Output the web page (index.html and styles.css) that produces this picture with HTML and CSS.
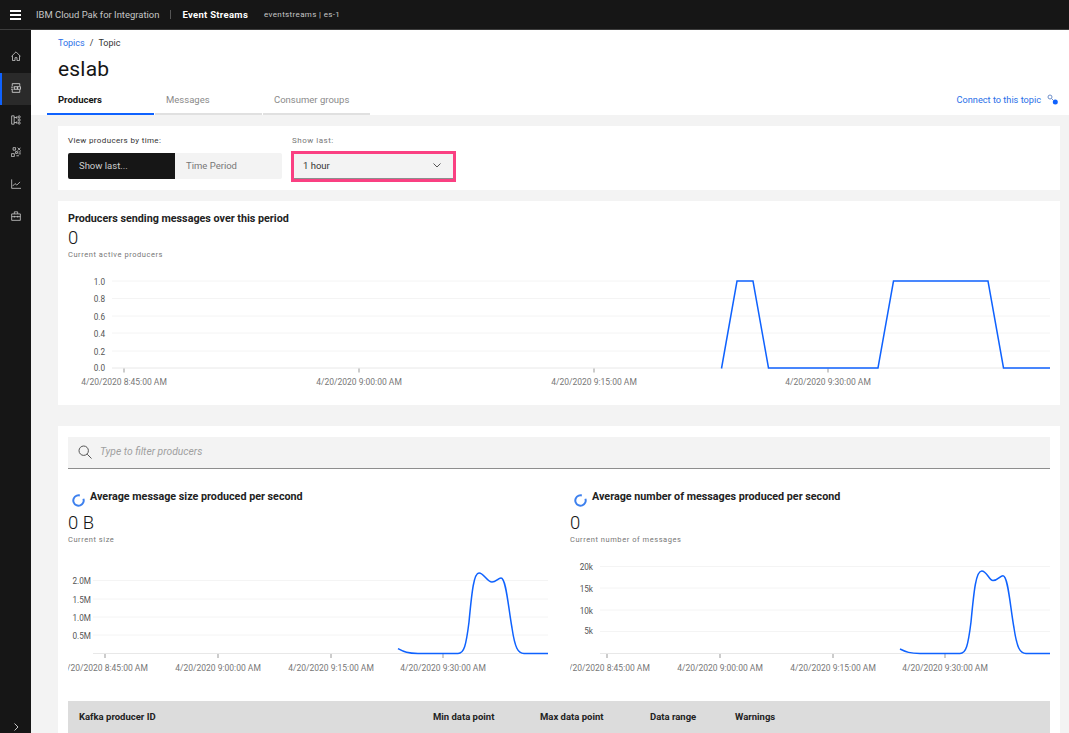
FILE: index.html
```html
<!DOCTYPE html>
<html lang="en">
<head>
<meta charset="UTF-8">
<title>Event Streams</title>
<link rel="stylesheet" href="styles.css">
</head>
<body>

<header class="topbar">
	<svg class="burger" width="11" height="10" viewBox="0 0 11 10"><path d="M0 0h11v2H0zM0 4h11v2H0zM0 8h11v2H0z" fill="#fff"/></svg>
	<span class="topbar-product">IBM Cloud Pak for Integration</span>
	<span class="topbar-sep"></span>
	<span class="topbar-app">Event Streams</span>
	<span class="topbar-inst">eventstreams | es-1</span>
</header>

<div class="page">
	<nav class="sidenav">
		<div class="sidenav-item">
			<svg width="10" height="10" viewBox="0 0 12 12" fill="none" stroke="#c6c6c6"><path d="M.5 6.500L6 1l5.500 5.500M1.800 5.500v6h3V8h2.400v3.500h3v-6"/></svg>
		</div>
		<div class="sidenav-item sidenav-item-active">
			<svg width="10" height="10" viewBox="0 0 12 12" fill="none" stroke="#d8d8d8"><path d="M1.500 3.500V.8h9v2.700M1.500 8.500v2.700h9V8.500M0 5h3M0 7.500h3"/><rect x="4" y="4.500" width="3.500" height="3"/><rect x="8" y="4.500" width="3.500" height="3"/></svg>
		</div>
		<div class="sidenav-item">
			<svg width="10" height="10" viewBox="0 0 12 12" fill="none" stroke="#c6c6c6"><path d="M.8 1h3v10h-3zM3.800 3H7M3.800 9H7M7 1.500v3M7 7.500v3"/><circle cx="9.800" cy="2.300" r="1.300"/><circle cx="9.800" cy="6" r="1.300"/><circle cx="9.800" cy="9.700" r="1.300"/></svg>
		</div>
		<div class="sidenav-item">
			<svg width="10" height="10" viewBox="0 0 12 12" fill="none" stroke="#c6c6c6"><path d="M2.500.8h3v3h-3zM.5 8h3.500v3.500H.5zM8 .8l3.500 3.500M11.500.8L8 4.300M5.500 5.500h2.200v2.200H5.500zM9 6h2.800M9 8.200h2.800M6.500 10.500h3"/></svg>
		</div>
		<div class="sidenav-item">
			<svg width="10" height="10" viewBox="0 0 12 12" fill="none" stroke="#c6c6c6"><path d="M.8.500v10.700H12M2 8.500l2.800-3 2.200 1.800 3.800-3.800"/></svg>
		</div>
		<div class="sidenav-item">
			<svg width="10" height="10" viewBox="0 0 12 12" fill="none" stroke="#c6c6c6"><path d="M.8 3.500h10.400v7.700H.8zM4 3.500V1h4v2.500M.8 6.800h10.400M4 5.800v2M8 5.800v2"/></svg>
		</div>
		<svg class="sidenav-expand" width="6" height="8" viewBox="0 0 6 8" fill="none" stroke="#c6c6c6"><path d="M1.500.5L5 4 1.500 7.500"/></svg>
	</nav>

	<main class="content">
		<div class="page-head">
			<div class="crumbs"><a class="link">Topics</a><span class="crumb-sep">/</span><span>Topic</span></div>
			<h1 class="page-title">eslab</h1>
			<div class="tabs-row">
				<div class="tabs">
					<div class="tab tab-active">Producers</div>
					<div class="tab">Messages</div>
					<div class="tab">Consumer groups</div>
				</div>
				<a class="connect link">Connect to this topic
					<svg width="11" height="11" viewBox="0 0 11 11" fill="none"><circle cx="3" cy="3" r="2" stroke="#6f8fc9"/><path d="M4.500 4.500l2 2" stroke="#6f8fc9"/><circle cx="8.300" cy="8" r="2.500" fill="#0f62fe"/></svg>
				</a>
			</div>
		</div>

		<div class="panels">
			<section class="card card-filter">
				<div>
					<div class="field-label">View producers by time:</div>
					<div class="switcher">
						<div class="switch switch-on">Show last...</div>
						<div class="switch">Time Period</div>
					</div>
				</div>
				<div class="field-last">
					<div class="field-label field-label-light">Show last:</div>
					<div class="select">
						<span>1 hour</span>
						<svg width="8" height="5" viewBox="0 0 8 5" fill="none" stroke="#555"><path d="M.5.500L4 4 7.500.5"/></svg>
					</div>
				</div>
			</section>

			<section class="card card-chart">
				<h2 class="chart-title">Producers sending messages over this period</h2>
				<div class="metric">0</div>
				<div class="metric-label">Current active producers</div>
				<svg class="chart" width="982" height="130" viewBox="10 6.500 982 130">
					<g class="grid">
						<path d="M54 27.500H992M54 45H992M54 62.500H992M54 79.500H992M54 97.500H992"/>
						<path class="axis" d="M54 114.500H992"/>
						<path class="tick" d="M66 115v4M301 115v4M536 115v4M770 115v4"/>
					</g>
					<g class="labels-y">
						<text x="47" y="31">1.0</text>
						<text x="47" y="48.500">0.8</text>
						<text x="47" y="66">0.6</text>
						<text x="47" y="83">0.4</text>
						<text x="47" y="101">0.2</text>
						<text x="47" y="117">0.0</text>
					</g>
					<g class="labels-x">
						<text x="66" y="131">4/20/2020 8:45:00 AM</text>
						<text x="301" y="131">4/20/2020 9:00:00 AM</text>
						<text x="536" y="131">4/20/2020 9:15:00 AM</text>
						<text x="770" y="131">4/20/2020 9:30:00 AM</text>
					</g>
					<path class="line" d="M663.500 115L679 27.500H695L710.500 114.500H820L835.500 27.500H930L945.500 114.500H992"/>
				</svg>
			</section>

			<section class="card card-list">
				<div class="search">
					<svg width="14" height="14" viewBox="0 0 14 14" fill="none" stroke="#555"><circle cx="5.700" cy="5.700" r="4.700"/><path d="M9.200 9.200L13.500 13.500"/></svg>
					<span>Type to filter producers</span>
				</div>

				<div class="chart-pair">
					<div class="chart-col">
						<h2 class="chart-title chart-title-spin">
							<svg class="spinner" width="13" height="13" viewBox="0 0 13 13"><circle cx="6.500" cy="6.500" r="5.200" fill="none" stroke="#3d80ee" stroke-width="2" stroke-dasharray="27 5.700" transform="rotate(-20 6.500 6.500)"/></svg>
							Average message size produced per second
						</h2>
						<div class="metric">0 B</div>
						<div class="metric-label">Current size</div>
						<svg class="chart chart-clip" width="480" height="130" viewBox="0 -15 480 130">
							<g class="grid">
								<path d="M25 20.500H480M25 39H480M25 57H480M25 75H480"/>
								<path class="axis" d="M25 93.500H480"/>
								<path class="tick" d="M37 94v4M150 94v4M263 94v4M375 94v4"/>
							</g>
							<g class="labels-y">
								<text x="23" y="24">2.0M</text>
								<text x="23" y="42.500">1.5M</text>
								<text x="23" y="60.500">1.0M</text>
								<text x="23" y="78.500">0.5M</text>
							</g>
							<g class="labels-x">
								<text x="37" y="111">4/20/2020 8:45:00 AM</text>
								<text x="150" y="111">4/20/2020 9:00:00 AM</text>
								<text x="263" y="111">4/20/2020 9:15:00 AM</text>
								<text x="375" y="111">4/20/2020 9:30:00 AM</text>
							</g>
							<path class="line" d="M330 88.700C336 92 340 93.500 350 93.500H390C396 93.500 398 86 401 62C404 30 406 13 411 13C416 13 419 22 424 22C428 22 430 18 433 18C438 18 440 45 444 68C447 88 450 93.500 456 93.500H480"/>
						</svg>
					</div>
					<div class="chart-col">
						<h2 class="chart-title chart-title-spin">
							<svg class="spinner" width="13" height="13" viewBox="0 0 13 13"><circle cx="6.500" cy="6.500" r="5.200" fill="none" stroke="#3d80ee" stroke-width="2" stroke-dasharray="27 5.700" transform="rotate(-20 6.500 6.500)"/></svg>
							Average number of messages produced per second
						</h2>
						<div class="metric">0</div>
						<div class="metric-label">Current number of messages</div>
						<svg class="chart chart-clip" width="480" height="130" viewBox="0 -1 480 130">
							<g class="grid">
								<path d="M30 20.500H480M30 42H480M30 64H480M30 85.500H480"/>
								<path class="axis" d="M30 107.500H480"/>
								<path class="tick" d="M37 108v4M150 108v4M263 108v4M375 108v4"/>
							</g>
							<g class="labels-y">
								<text x="23" y="24">20k</text>
								<text x="23" y="46">15k</text>
								<text x="23" y="68">10k</text>
								<text x="23" y="88">5k</text>
							</g>
							<g class="labels-x">
								<text x="37" y="125">4/20/2020 8:45:00 AM</text>
								<text x="150" y="125">4/20/2020 9:00:00 AM</text>
								<text x="263" y="125">4/20/2020 9:15:00 AM</text>
								<text x="375" y="125">4/20/2020 9:30:00 AM</text>
							</g>
							<path class="line" d="M330 103C336 106 340 107.500 350 107.500H390C396 107.500 398 100 401 76C404 44 406 25 411.700 25C417 25 419 34.500 423 34.500C428 34.500 430 29.700 433 29.700C438 29.700 440 59 444 82C447 102 450 107.500 456 107.500H480"/>
						</svg>
					</div>
				</div>

				<div class="table-head">
					<div class="col-id">Kafka producer ID</div>
					<div class="col-min">Min data point</div>
					<div class="col-max">Max data point</div>
					<div class="col-range">Data range</div>
					<div class="col-warn">Warnings</div>
				</div>
			</section>
		</div>
	</main>
</div>

</body>
</html>
```

FILE: styles.css
```css
* {
	box-sizing: border-box;
}
body {
	margin: 0;
	height: 733px;
	overflow: hidden;
	background: #f3f3f3;
	color: #161616;
	font-family: "Roboto", "Noto Sans", sans-serif;
	font-size: 10px;
}

.topbar {
	height: 30px;
	background: #161616;
	border-bottom: 1px solid #3d3d3d;
	color: #c6c6c6;
	display: flex;
	align-items: center;
	padding-left: 10px;
}
.burger {
	margin-right: 15px;
}
.topbar-product {
	font-size: 9.450px;
}
.topbar-sep {
	width: 1px;
	height: 9px;
	background: #555;
	margin: 0 11px;
}
.topbar-app {
	color: #fff;
	font-weight: 700;
	font-size: 9.500px;
	letter-spacing: .3px;
}
.topbar-inst {
	margin-left: 16px;
	font-size: 8px;
	letter-spacing: .35px;
}

.page {
	display: flex;
	height: 703px;
}
.sidenav {
	width: 31px;
	background: #161616;
	padding-top: 11px;
	position: relative;
	flex-shrink: 0;
}
.sidenav-item {
	height: 32px;
	display: flex;
	align-items: center;
	justify-content: center;
	border-left: 2px solid transparent;
	padding: 0 2px 2px 0;
}
.sidenav-item-active {
	background: #2a2a2a;
	border-left-color: #0f62fe;
}
.sidenav-expand {
	position: absolute;
	left: 13px;
	bottom: 2px;
}

.content {
	flex: 1;
	min-width: 0;
}
.page-head {
	background: #fff;
	height: 85px;
	padding: 7px 0 0 16px;
}
.link {
	color: #2a6fe8;
}
.crumbs {
	font-size: 9px;
	line-height: 12px;
	padding-left: 11px;
	color: #333;
}
.crumb-sep {
	margin: 0 5px;
}
.page-title {
	margin: 7px 0 0 11px;
	font-size: 21px;
	font-weight: 400;
	line-height: 26px;
	letter-spacing: .2px;
}
.tabs-row {
	display: flex;
	justify-content: space-between;
	align-items: flex-end;
	margin-top: 3px;
}
.tabs {
	display: flex;
	gap: 1px;
}
.tab {
	width: 107px;
	height: 30px;
	padding: 9px 0 0 11px;
	border-bottom: 2px solid #e0e0e0;
	font-size: 9.500px;
	line-height: 12px;
	color: #8a8a8a;
}
.tab-active {
	border-bottom-color: #0f62fe;
	color: #161616;
	font-weight: 700;
}
.connect {
	font-size: 9.200px;
	display: flex;
	align-items: center;
	gap: 6px;
	padding: 0 11px 10px 0;
}

.panels {
	padding: 11px 9px 0 27px;
	display: flex;
	flex-direction: column;
	gap: 11px;
}
.card {
	background: #fff;
	padding: 0 10px;
}
.card-filter {
	height: 64px;
	display: flex;
	gap: 10px;
	padding-top: 10px;
}
.field-label {
	font-size: 8px;
	line-height: 10px;
	letter-spacing: .35px;
	margin-bottom: 7px;
	color: #333;
}
.field-label-light {
	color: #777;
	letter-spacing: .5px;
}
.switcher {
	display: flex;
	width: 214px;
	height: 26px;
	background: #f3f3f3;
	border-radius: 2px;
	overflow: hidden;
}
.switch {
	width: 107px;
	padding-left: 11px;
	line-height: 26px;
	font-size: 9.500px;
	color: #777;
}
.switch-on {
	background: #161616;
	color: #ccc;
}
.select {
	width: 165px;
	height: 31px;
	margin: -2px 0 0 -1px;
	border: 3px solid #fa4082;
	background: #f3f3f3;
	box-shadow: inset 0 -1px 0 #8d8d8d;
	display: flex;
	justify-content: space-between;
	align-items: center;
	padding: 0 12px 2px 9px;
	font-size: 9.500px;
	color: #333;
}

.card-chart {
	height: 204px;
	padding-top: 11px;
}
.chart-title {
	margin: 0;
	font-size: 10.750px;
	font-weight: 700;
	line-height: 13px;
	color: #222;
}
.metric {
	font-size: 18.500px;
	font-weight: 300;
	line-height: 22px;
	margin-top: 2px;
	color: #161616;
}
.metric-label {
	font-size: 7.500px;
	line-height: 10px;
	letter-spacing: .55px;
	margin-top: 1px;
	color: #777;
}
.chart {
	display: block;
	overflow: visible;
}
.chart-clip {
	overflow: hidden;
}
.grid path {
	fill: none;
	stroke: #f4f4f4;
}
.grid .axis {
	stroke: #e8e8e8;
}
.grid .tick {
	stroke: #999;
}
.labels-y text {
	font-size: 8.200px;
	fill: #555;
	text-anchor: end;
}
.labels-x text {
	font-size: 8.500px;
	fill: #777;
	text-anchor: middle;
}
.line {
	fill: none;
	stroke: #0f62fe;
	stroke-width: 1.500;
}

.card-list {
	margin-top: 10px;
	padding-top: 11px;
	height: 307px;
}
.search {
	height: 32px;
	background: #f3f3f3;
	border-bottom: 1px solid #8d8d8d;
	display: flex;
	align-items: center;
	gap: 8px;
	padding: 0 0 2px 10px;
	font-size: 10.300px;
	font-style: italic;
	color: #a0a0a0;
}
.chart-pair {
	display: flex;
	gap: 22px;
	padding-top: 21px;
	height: 232px;
}
.chart-col {
	width: 480px;
}
.chart-title-spin {
	display: flex;
	height: 20px;
}
.spinner {
	margin: 4px 5px 0 4px;
	flex-shrink: 0;
}
.table-head {
	height: 32px;
	background: #dcdcdc;
	display: flex;
	align-items: center;
	font-size: 9.500px;
	font-weight: 700;
	color: #222;
	padding: 0 0 2px 11px;
}
.col-id { width: 354px; }
.col-min { width: 107px; }
.col-max { width: 110px; }
.col-range { width: 85px; }
```
